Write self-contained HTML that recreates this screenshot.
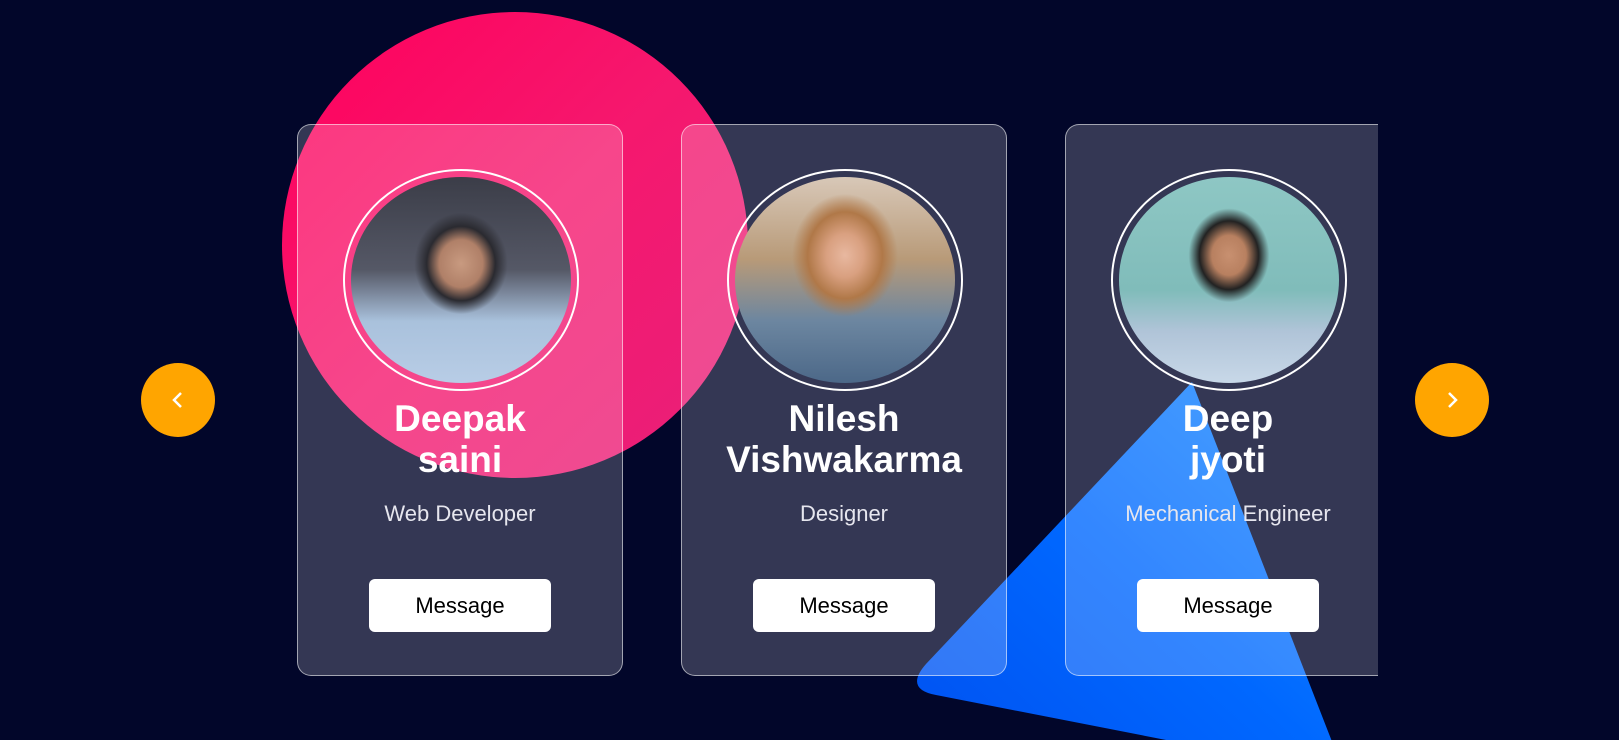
<!DOCTYPE html>
<html><head><meta charset="utf-8"><style>
*{margin:0;padding:0;box-sizing:border-box}
html{width:1619px;height:740px;overflow:hidden}
body{width:1619px;height:740px;background:#02062a;overflow:hidden;position:relative;font-family:"Liberation Sans",Arial,sans-serif}
.circle{position:absolute;left:282px;top:12px;width:466px;height:466px;border-radius:50%;background:linear-gradient(135deg,#ff005c 0%,#f5186e 50%,#e8207a 100%)}
svg.tri{position:absolute;left:0;top:0;display:block}
.wrap{position:absolute;left:297px;top:124px;width:1081px;height:560px;overflow:hidden}
.card{position:absolute;top:0;width:326px;height:552px;border:1px solid rgba(255,255,255,.55);border-radius:14px;background:rgba(255,255,255,.2);text-align:center;color:#fff}
.ring{position:absolute;left:45px;top:44px;width:236px;height:222px;border:2px solid #fff;border-radius:50%}
.ph{position:absolute;left:6px;top:6px;right:6px;bottom:6px;border-radius:50%;overflow:hidden}
.name{position:absolute;top:273px;left:0;right:0;font-weight:bold;font-size:37px;line-height:41px}
.role{position:absolute;top:376px;left:0;right:0;font-size:22px;color:#e6e6ee}
.btn{position:absolute;left:71px;top:454px;width:182px;height:53px;background:#fff;border-radius:6px;color:#000;font-size:22px;line-height:53px}
.arr{position:absolute;top:363px;width:74px;height:74px;border-radius:50%;background:#ffa500}
.arr svg{position:absolute;left:27px;top:27px}
</style></head><body>
<div class="circle"></div>
<svg class="tri" width="1619" height="740"><defs><linearGradient id="g" x1="0" y1="1" x2="1" y2="0"><stop offset="0" stop-color="#0050f0"/><stop offset="0.5" stop-color="#0068ff"/><stop offset="1" stop-color="#1a8cff"/></linearGradient></defs>
<path d="M1192 382 L926 664 Q904 689 936 695 L1345 775 Z" fill="url(#g)"/></svg>
<div class="wrap">
<div class="card" style="left:0">
<div class="ring"><div class="ph" style="background:radial-gradient(ellipse at 50% 42%,#c89a80 0,#b08068 14%,#2a2a30 22%,transparent 30%),linear-gradient(180deg,#3b3d48 0%,#555866 45%,#a9c1dc 70%,#b8cde6 100%)"></div></div>
<div class="name">Deepak<br>saini</div><div class="role">Web Developer</div><div class="btn">Message</div></div>
<div class="card" style="left:384px">
<div class="ring"><div class="ph" style="background:radial-gradient(ellipse at 50% 38%,#e8b8a0 0,#d9a080 12%,#b07848 24%,transparent 34%),linear-gradient(180deg,#d8c8b8 0%,#b89a78 40%,#6c86a0 70%,#4c6888 100%)"></div></div>
<div class="name">Nilesh<br>Vishwakarma</div><div class="role">Designer</div><div class="btn">Message</div></div>
<div class="card" style="left:768px">
<div class="ring"><div class="ph" style="background:radial-gradient(ellipse at 50% 38%,#c89070 0,#b88060 11%,#222 19%,transparent 26%),linear-gradient(180deg,#8ec7c4 0%,#80bcba 55%,#b0c4d8 75%,#c8d8e8 100%)"></div></div>
<div class="name">Deep<br>jyoti</div><div class="role">Mechanical Engineer</div><div class="btn">Message</div></div>
</div>
<div class="arr" style="left:141px"><svg width="20" height="20" viewBox="0 0 20 20"><path d="M13 3 L6 10 L13 17" stroke="#fff" stroke-width="2.5" fill="none"/></svg></div>
<div class="arr" style="left:1415px"><svg width="20" height="20" viewBox="0 0 20 20"><path d="M7 3 L14 10 L7 17" stroke="#fff" stroke-width="2.5" fill="none"/></svg></div>
</body></html>
